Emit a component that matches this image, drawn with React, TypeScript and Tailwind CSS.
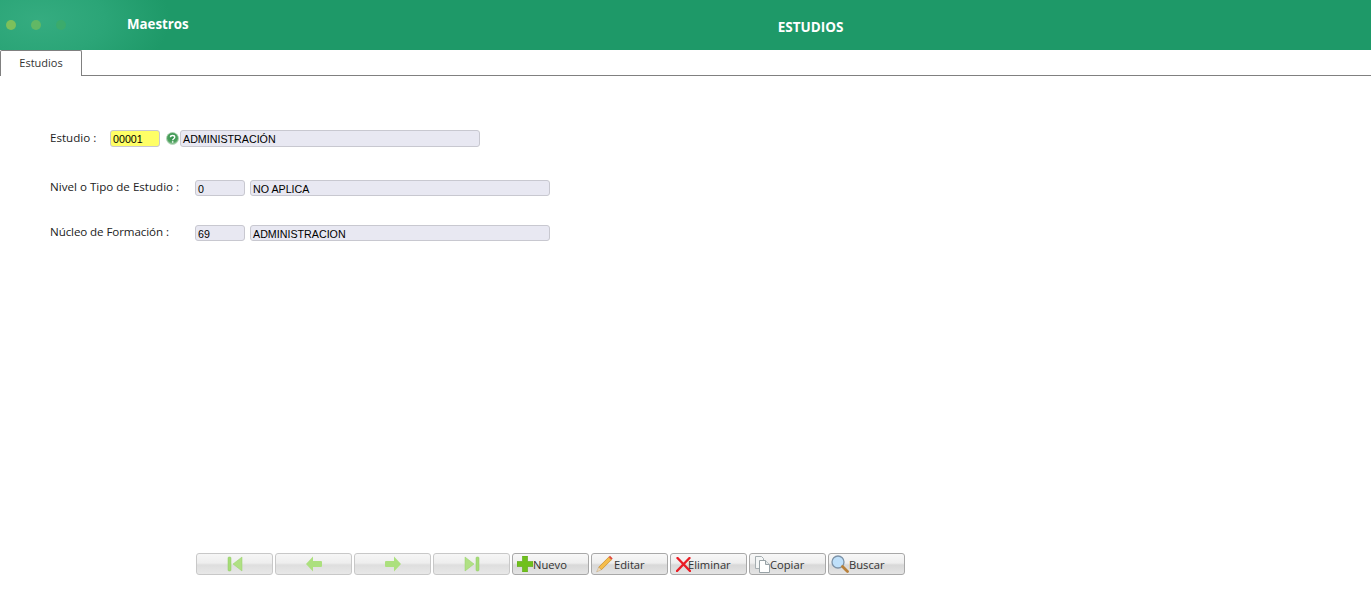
const labelFont = "font-['Open_Sans',sans-serif] text-[11.600px] text-[#222]";

const Field = ({ value, className }: { value: string; className: string }) => (
    <div className={`h-4 shrink-0 rounded-[3px] border border-[#c8c8d0] bg-[#e8e8f2] pl-[2px] font-['Liberation_Sans',sans-serif] text-[10.700px] leading-[15px] text-black ${className}`}>
        <span className="relative top-[1px]">{value}</span>
    </div>
);

const HelpIcon = () => (
    <svg width="13" height="13" viewBox="0 0 13 13" className="ml-[6px] mr-[1px] shrink-0">
        <defs>
            <radialGradient id="helpGlow" cx="50%" cy="40%" r="60%">
                <stop offset="0%" stopColor="#2f8f4a" />
                <stop offset="70%" stopColor="#4fa25f" />
                <stop offset="100%" stopColor="#b5d8b8" />
            </radialGradient>
        </defs>
        <circle cx="6.500" cy="6.500" r="6" fill="url(#helpGlow)" stroke="#a9cfae" strokeWidth="0.8" />
        <path d="M4.500 5.200c0-2.300 4.200-2.300 4.200 0 0 1.500-2 1.500-2 3" fill="none" stroke="#fff" strokeWidth="1.400" />
        <rect x="5.900" y="9.200" width="1.500" height="1.500" fill="#fff" />
    </svg>
);

const FirstIcon = () => (
    <svg width="16" height="16" viewBox="0 0 16 16"><rect x="1" y="1" width="3" height="14" rx="1" fill="#a6dc78" stroke="#8fcb62" strokeWidth="0.5" /><path d="M15 1v14L6 8z" fill="#b0e084" stroke="#96d06a" strokeWidth="0.5" /></svg>
);
const LastIcon = () => (
    <svg width="16" height="16" viewBox="0 0 16 16"><rect x="12" y="1" width="3" height="14" rx="1" fill="#a6dc78" stroke="#8fcb62" strokeWidth="0.5" /><path d="M1 1v14l9-7z" fill="#b0e084" stroke="#96d06a" strokeWidth="0.5" /></svg>
);
const PrevIcon = () => (
    <svg width="16" height="16" viewBox="0 0 16 16"><path d="M0 8l7-7.500v4.500h8a1 1 0 0 1 1 1v4a1 1 0 0 1-1 1H7v4.500z" fill="#ace07e" /></svg>
);
const NextIcon = () => (
    <svg width="16" height="16" viewBox="0 0 16 16"><path d="M16 8L9 .5V5H1a1 1 0 0 0-1 1v4a1 1 0 0 0 1 1h8v4.500z" fill="#ace07e" /></svg>
);
const PlusIcon = () => (
    <svg width="16" height="16" viewBox="0 0 16 16" className="shrink-0"><path d="M5.500 0h5v5.500H16v5h-5.500V16h-5v-5.500H0v-5h5.500z" fill="#6fc01c" stroke="#5aa515" strokeWidth="0.6" /></svg>
);
const PencilIcon = () => (
    <svg width="18" height="18" viewBox="0 0 17 17" className="shrink-0">
        <path d="M3.500 11.500L13 2l2.500 2.500L6 14z" fill="#f5bd4c" stroke="#c98a25" strokeWidth="0.7" />
        <path d="M13 2l1.200-1.200 2.500 2.500-1.200 1.200z" fill="#e0483a" />
        <path d="M3.500 11.500L6 14l-4.500 2z" fill="#f1dcb8" stroke="#b59870" strokeWidth="0.4" />
    </svg>
);
const CrossIcon = () => (
    <svg width="15" height="15" viewBox="0 0 15 15" className="mr-[-3px] shrink-0"><path d="M1.500 1l12.500 13M13.500 1L1 14" stroke="#ea1c24" strokeWidth="2.400" strokeLinecap="round" /></svg>
);
const CopyIcon = () => (
    <svg width="15" height="17" viewBox="0 0 15 17" className="shrink-0">
        <path d="M.5.5h6l2 2v10h-8z" fill="#f4f6f6" stroke="#a5adb0" />
        <path d="M4.500 4.500h6l4 4v8h-10z" fill="#fff" stroke="#98a2a6" />
        <path d="M10.500 4.500v4h4" fill="#e2e7e8" stroke="#98a2a6" />
    </svg>
);
const SearchIcon = () => (
    <svg width="18" height="18" viewBox="0 0 18 18" className="shrink-0">
        <circle cx="7" cy="7" r="6" fill="#bfe0fa" stroke="#7d93a8" strokeWidth="1.300" />
        <path d="M11.500 11.500L16.500 16.500" stroke="#b8803a" strokeWidth="2.800" strokeLinecap="round" />
    </svg>
);

const navButtons = [<FirstIcon key="first" />, <PrevIcon key="prev" />, <NextIcon key="next" />, <LastIcon key="last" />];

const actionButtons = [
    { label: 'Nuevo', icon: <PlusIcon />, pad: 'pl-[4px]', gap: 'gap-0' },
    { label: 'Editar', icon: <PencilIcon />, pad: 'pl-[3px]', gap: 'gap-[1px]' },
    { label: 'Eliminar', icon: <CrossIcon />, pad: 'pl-[5px]', gap: 'gap-0' },
    { label: 'Copiar', icon: <CopyIcon />, pad: 'pl-[5px]', gap: 'gap-0' },
    { label: 'Buscar', icon: <SearchIcon />, pad: 'pl-[2px]', gap: 'gap-0' },
];

const App = () => {
    return (
        <div className="flex h-[594px] flex-col overflow-hidden bg-white">
            {/* cabecera */}
            <div className="flex h-[50px] shrink-0 bg-[#1e9968] bg-[radial-gradient(ellipse_130px_70px_at_40px_20px,#35ac80_0%,#2ba577_50%,#1e9968_100%)] font-['Open_Sans',sans-serif] font-bold text-white">
                <div className="flex w-[252px] items-center">
                    <div className="flex items-center gap-[15px] pl-[6px]">
                        <span className="h-[10px] w-[10px] rounded-full bg-[#7cc05b]" />
                        <span className="h-[10px] w-[10px] rounded-full bg-[#62b865]" />
                        <span className="h-[10px] w-[10px] rounded-full bg-[#3bab6c]" />
                    </div>
                    <span className="ml-[61px] text-[13.300px] leading-none">Maestros</span>
                </div>
                <div className="flex flex-1 items-center justify-center pr-[2px] pt-[4px] text-[13.500px]">ESTUDIOS</div>
            </div>

            {/* pestañas */}
            <div className="flex h-[26px] shrink-0 border-b border-[#808080]">
                <div className="mb-[-1px] flex h-[26px] w-[82px] items-center justify-center rounded-t-[2px] border border-b-0 border-[#808080] bg-white font-['Open_Sans',sans-serif] text-[11px] text-[#333]">
                    Estudios
                </div>
            </div>

            {/* formulario */}
            <div className={`flex flex-1 flex-col pl-[50px] pt-[54px] ${labelFont}`}>
                <div className="flex h-[17px] items-center">
                    <span className="relative top-[-1px] w-[60px]">Estudio :</span>
                    <Field value="00001" className="h-[17px] w-[50px] !bg-[#ffff66]" />
                    <HelpIcon />
                    <Field value="ADMINISTRACIÓN" className="h-[17px] w-[300px]" />
                </div>
                <div className="mt-[33px] flex h-4 items-center">
                    <span className="relative top-[-1px] w-[145px]">Nivel o Tipo de Estudio :</span>
                    <Field value="0" className="w-[50px]" />
                    <Field value="NO APLICA" className="ml-[5px] w-[300px]" />
                </div>
                <div className="mt-[29px] flex h-4 items-center">
                    <span className="relative top-[-1px] w-[145px] tracking-[-0.1px]">Núcleo de Formación :</span>
                    <Field value="69" className="w-[50px]" />
                    <Field value="ADMINISTRACION" className="ml-[5px] w-[300px]" />
                </div>
            </div>

            {/* barra de botones */}
            <div className="mb-[19px] flex shrink-0 gap-[2px] pl-[196px]">
                {navButtons.map((icon, index) => (
                    <div key={index} className="flex h-[22px] w-[77px] items-center justify-center rounded-[3px] border border-[#c8c8c8] bg-[linear-gradient(#f6f6f6,#eeeeee_45%,#dedede_55%,#e8e8e8)]">
                        {icon}
                    </div>
                ))}
                {actionButtons.map((item) => (
                    <div key={item.label} className={`flex h-[22px] w-[77px] items-center rounded-[3px] border border-[#a8a8a8] bg-[linear-gradient(#f8f8f8,#eeeeee_45%,#d8d8d8_55%,#e4e4e4)] font-['Open_Sans',sans-serif] text-[11.200px] text-[#333] ${item.pad} ${item.gap}`}>
                        {item.icon}
                        <span className="relative top-[1px]">{item.label}</span>
                    </div>
                ))}
            </div>
        </div>
    );
};

export default App;
